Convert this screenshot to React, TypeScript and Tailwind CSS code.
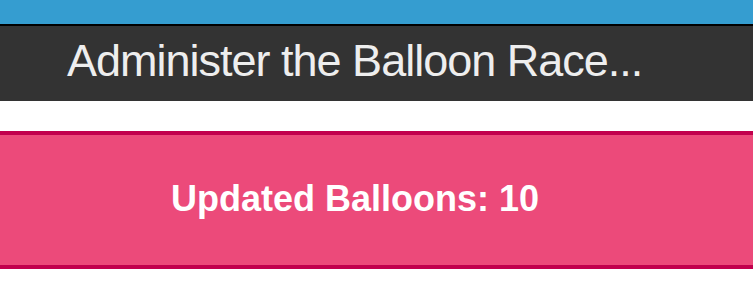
export default function App() {
  return (
    <div className="w-[753px] h-[285px] bg-white overflow-hidden" style={{ fontFamily: '"Liberation Sans", Arial, sans-serif' }}>
      <div className="h-[24px] bg-[#359dd0]" />
      <div className="h-[2px] bg-[#000000]" />
      <div className="h-[75px] bg-[#333333] pt-[12px] pl-[67px]">
        <h1 className="text-[45px] leading-none tracking-[-1px] text-[#eeeeee] whitespace-nowrap">
          Administer the Balloon Race...
        </h1>
      </div>
      <div className="h-[30px]" />
      <div className="h-[138px] bg-[#ec4a7a] border-y-4 border-[#c2004d] pt-[46px] flex justify-center pr-[43px]">
        <div className="text-[36px] leading-none font-bold text-white whitespace-nowrap">
          Updated Balloons: 10
        </div>
      </div>
    </div>
  );
}
